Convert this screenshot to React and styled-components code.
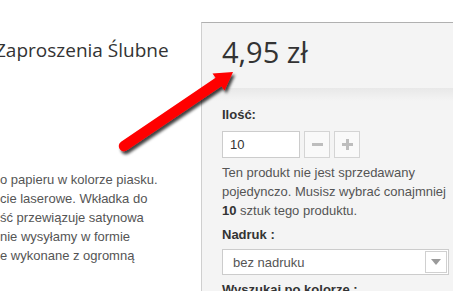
import React from "react";
import styled, { createGlobalStyle } from "styled-components";

const GlobalStyle = createGlobalStyle`
  html, body {
    margin: 0;
    padding: 0;
    background: #fff;
    overflow: hidden;
  }
  body {
    font-family: "Liberation Sans", Arial, sans-serif;
  }
`;

const descriptionLines = [
  "o papieru w kolorze piasku.",
  "cie laserowe. Wkładka do",
  "ść przewiązuje satynowa",
  "nie wysyłamy w formie",
  "e wykonane z ogromną",
];

function App() {
  return (
    <Page>
      <GlobalStyle />
      <LeftColumn>
        <Title>Zaproszenia Ślubne</Title>
        <Description>
          {descriptionLines.map((line, index) => (
            <Line key={index}>{line}</Line>
          ))}
        </Description>
      </LeftColumn>

      <BuyPanel>
        <PriceHeader>
          <Price>4,95 zł</Price>
        </PriceHeader>
        <PanelBody>
          <Label>Ilość:</Label>
          <QtyRow>
            <QtyInput>10</QtyInput>
            <StepButton>
              <svg width="11" height="11" viewBox="0 0 11 11">
                <rect x="0" y="4" width="11" height="3" fill="#bdbdbd" />
              </svg>
            </StepButton>
            <StepButton>
              <svg width="11" height="11" viewBox="0 0 11 11">
                <rect x="0" y="4" width="11" height="3" fill="#bdbdbd" />
                <rect x="4" y="0" width="3" height="11" fill="#bdbdbd" />
              </svg>
            </StepButton>
          </QtyRow>
          <Note>
            Ten produkt nie jest sprzedawany
            <br />
            pojedynczo. Musisz wybrać conajmniej
            <br />
            <b>10</b> sztuk tego produktu.
          </Note>
          <Label>Nadruk :</Label>
          <Select>
            <span>bez nadruku</span>
            <SelectArrow>
              <svg width="10" height="6" viewBox="0 0 10 6">
                <polygon points="0,0 10,0 5,6" fill="#9a9a9a" />
              </svg>
            </SelectArrow>
          </Select>
          <Label>Wyszukaj po kolorze :</Label>
        </PanelBody>
      </BuyPanel>

      <Arrow width="260" height="170" viewBox="0 0 260 170">
        <defs>
          <filter id="shadow" x="-20%" y="-20%" width="140%" height="140%">
            <feDropShadow dx="2" dy="3" stdDeviation="1.6" floodColor="#000" floodOpacity="0.75" />
          </filter>
        </defs>
        <g filter="url(#shadow)">
          <line x1="124" y1="146" x2="220" y2="81" stroke="#ff0000" strokeWidth="10.5" strokeLinecap="round" />
          <polygon points="233,72 224.5,90.5 212.5,73.5" fill="#ff0000" />
        </g>
      </Arrow>
    </Page>
  );
}

export default App;

const Page = styled.div`
  position: relative;
  display: flex;
  align-items: flex-start;
  width: 453px;
  height: 291px;
  overflow: hidden;
`;

const LeftColumn = styled.div`
  width: 201px;
  flex-shrink: 0;
  padding-top: 38px;
`;

const Title = styled.h1`
  margin: 0 0 0 -5px;
  font-family: "Open Sans", sans-serif;
  font-weight: 400;
  font-size: 19px;
  line-height: 24px;
  color: #333;
  white-space: nowrap;
`;

const Description = styled.div`
  margin-top: 108px;
  font-size: 13px;
  line-height: 19px;
  color: #555;
`;

const Line = styled.div`
  white-space: nowrap;
`;

const BuyPanel = styled.div`
  flex-shrink: 0;
  width: 300px;
  margin-top: 22px;
  border-top: 1px solid #b0b0b0;
  border-left: 1px solid #cfcfcf;
  background: #f4f4f4;
`;

const PriceHeader = styled.div`
  box-sizing: border-box;
  height: 65px;
  padding: 9px 20px 0;
  background: #f4f4f4;
`;

const Price = styled.div`
  font-family: "Open Sans", sans-serif;
  font-size: 29px;
  line-height: 40px;
  color: #333;
`;

const PanelBody = styled.div`
  padding: 17px 20px 0;
  background: linear-gradient(#e8e8e8 0px, #f4f4f4 13px);
`;

const Label = styled.div`
  font-size: 13px;
  line-height: 19px;
  font-weight: 700;
  color: #333;
  white-space: nowrap;
`;

const QtyRow = styled.div`
  display: flex;
  gap: 4px;
  margin: 7px 0 5px;
`;

const QtyInput = styled.div`
  box-sizing: border-box;
  width: 78px;
  height: 27px;
  padding-left: 7px;
  border: 1px solid #ccc;
  background: #fff;
  font-size: 13px;
  line-height: 25px;
  color: #333;
`;

const StepButton = styled.div`
  box-sizing: border-box;
  width: 26px;
  height: 27px;
  display: flex;
  align-items: center;
  justify-content: center;
  border: 1px solid #d4d4d4;
  background: #f9f9f9;
`;

const Note = styled.div`
  font-size: 13px;
  line-height: 19px;
  color: #555;
  white-space: nowrap;
  margin-bottom: 5px;

  b {
    color: #333;
  }
`;

const Select = styled.div`
  box-sizing: border-box;
  width: 227px;
  height: 26px;
  margin: 5px 0 5px;
  padding: 1px 1px 1px 10px;
  display: flex;
  align-items: center;
  justify-content: space-between;
  border: 1px solid #ccc;
  background: #fff;
  font-size: 13px;
  color: #555;
`;

const SelectArrow = styled.div`
  box-sizing: border-box;
  width: 22px;
  height: 22px;
  display: flex;
  align-items: center;
  justify-content: center;
  border: 1px solid #d0d0d0;
  background: #fff;
`;

const Arrow = styled.svg`
  position: absolute;
  left: 0;
  top: 0;
  pointer-events: none;
`;
